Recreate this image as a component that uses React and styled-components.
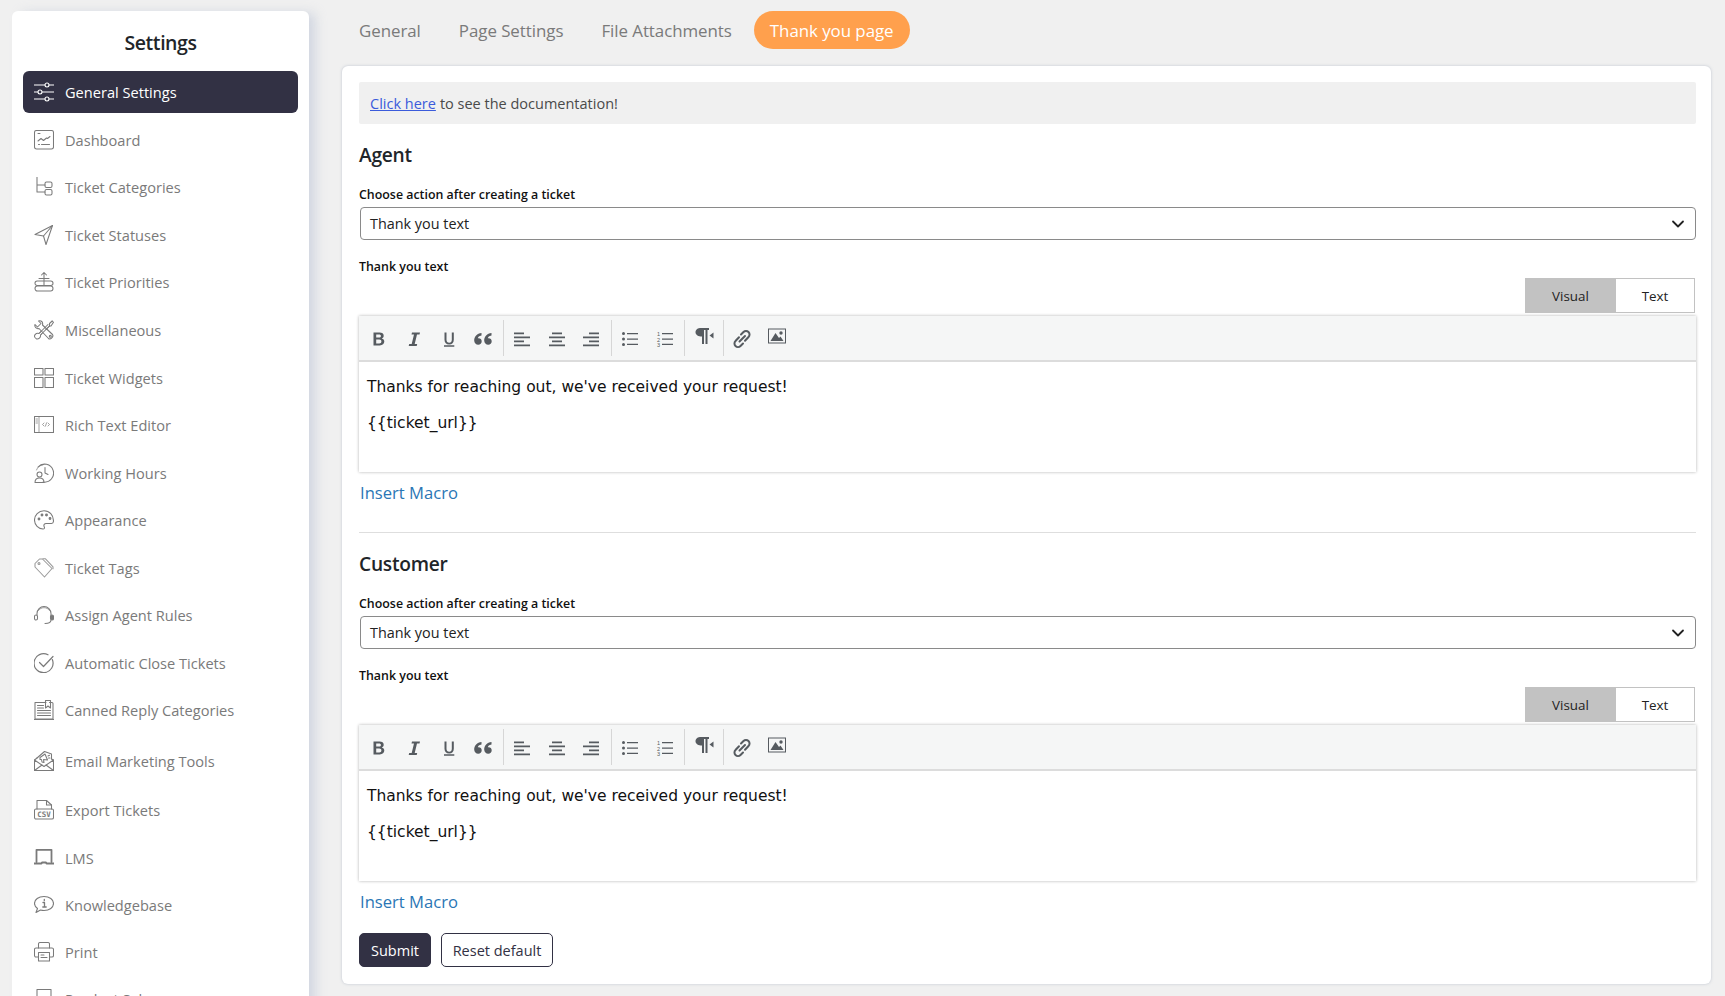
import React from "react";
import styled, { createGlobalStyle } from "styled-components";

const FONT = `"Open Sans", "Noto Sans", "Liberation Sans", sans-serif`;

const Global = createGlobalStyle`
  html, body { margin: 0; padding: 0; height: 996px; overflow: hidden; background: #f0f0f0; }
  * { box-sizing: border-box; }
  body { font-family: ${FONT}; color: #212529; }
`;

const Page = styled.div`
  display: flex;
  align-items: flex-start;
  height: 996px;
  overflow: hidden;
  padding: 11px 14px 0 12px;
  gap: 33px;
`;

const Sidebar = styled.aside`
  flex: 0 0 297px;
  background: #fff;
  border-radius: 6px 6px 0 0;
  box-shadow: 8px 0 12px -2px rgba(170, 182, 206, 0.45);
  padding: 0 11px;
  height: 1040px;
`;

const SideTitle = styled.h2`
  margin: 0;
  height: 60px;
  display: flex;
  align-items: center;
  justify-content: center;
  padding-top: 2px;
  font-size: 19.5px;
  font-weight: 600;
  color: #212529;
  letter-spacing: -0.45px;
`;

const NavList = styled.nav`
  display: flex;
  flex-direction: column;
`;

const NavItem = styled.div`
  display: flex;
  align-items: center;
  gap: 11px;
  flex: none;
  height: ${(p) => p.$h || 47.55}px;
  margin-top: ${(p) => p.$mt || 0}px;
  padding-left: 11px;
  border-radius: 6px;
  font-size: 14.6px;
  color: ${(p) => (p.$active ? "#fff" : "#7a7a7a")};
  background: ${(p) => (p.$active ? "#323144" : "transparent")};
  svg { flex: 0 0 20px; }
`;

const Main = styled.main`
  flex: 1;
  min-width: 0;
  display: flex;
  flex-direction: column;
`;

const TabBar = styled.div`
  display: flex;
  align-items: center;
  gap: 6px;
  height: 38px;
  margin-bottom: 17px;
  padding-left: 1px;
`;

const TopTab = styled.div`
  height: 38px;
  display: flex;
  align-items: center;
  padding: 0 16px;
  border-radius: 19px;
  font-size: 16.9px;
  letter-spacing: -0.05px;
  color: ${(p) => (p.$active ? "#fff" : "#7a7a7a")};
  background: ${(p) => (p.$active ? "#ffa04d" : "transparent")};
`;

const Card = styled.section`
  background: #fff;
  height: 918px;
  border-radius: 6px;
  box-shadow: 0 0 3px rgba(150, 160, 180, 0.55);
  padding: 16px 15px 0 17px;
`;

const Notice = styled.div`
  height: 42px;
  display: flex;
  align-items: center;
  gap: 4px;
  padding-left: 11px;
  background: #f0f0f0;
  border-radius: 2px;
  font-size: 14.5px;
  color: #4a4a4a;
  a { color: #3b5bdb; text-decoration: underline; }
`;

const Block = styled.div`
  display: flex;
  flex-direction: column;
`;

const Heading = styled.h3`
  margin: ${(p) => p.$mt}px 0 0;
  height: 28px;
  line-height: 28px;
  font-size: 19.2px;
  font-weight: 600;
  letter-spacing: -0.25px;
  color: #212529;
`;

const Label = styled.label`
  display: block;
  height: 18px;
  margin-top: ${(p) => p.$mt || 0}px;
  line-height: 18px;
  font-size: 12.4px;
  font-weight: 600;
  color: #111;
`;

const SelectBox = styled.div`
  display: flex;
  align-items: center;
  justify-content: space-between;
  height: 33px;
  margin: 3px 0 18px 1px;
  padding: 0 10px 0 9px;
  border: 1px solid #8a8a8a;
  border-radius: 4px;
  font-size: 14.4px;
  color: #222;
`;

const ModeRow = styled.div`
  display: flex;
  justify-content: flex-end;
  margin-top: 2px;
  height: 35px;
  padding-right: 1px;
`;

const ModeButton = styled.div`
  width: ${(p) => p.$w}px;
  height: 35px;
  display: flex;
  align-items: center;
  justify-content: center;
  font-size: 13.4px;
  color: #222;
  background: ${(p) => (p.$active ? "#c2c2c2" : "#fff")};
  border: 1px solid #c2c2c2;
  border-left-width: ${(p) => (p.$active ? 1 : 0)}px;
`;

const Editor = styled.div`
  margin-top: 3px;
  height: 156px;
  display: flex;
  flex-direction: column;
  box-shadow: 0 0 3px rgba(0, 0, 0, 0.3);
`;

const Toolbar = styled.div`
  height: 46px;
  flex: none;
  display: flex;
  align-items: stretch;
  padding: 4px 0 4px 3px;
  background: #f5f6f6;
  border-bottom: 2px solid #dcdcdc;
`;

const ToolGroup = styled.div`
  display: flex;
  padding-right: 2px;
  margin-right: 1px;
  border-right: ${(p) => (p.$last ? "none" : "1px solid #d6d6d6")};
`;

const ToolButton = styled.div`
  width: 34.7px;
  display: flex;
  align-items: center;
  justify-content: center;
  color: #565b60;
  padding-top: 2px;
  padding-bottom: ${(p) => (p.$raised ? 6 : 0)}px;
`;

const EditorBody = styled.div`
  flex: 1;
  padding: 16px 8px;
  font-family: "DejaVu Sans", Verdana, sans-serif;
  font-size: 15.5px;
  line-height: 19px;
  color: #111;
  p { margin: 0 0 17px; }
`;

const MacroLink = styled.a`
  display: block;
  margin: 9px 0 0 1px;
  height: 24px;
  line-height: 24px;
  font-size: 16.6px;
  color: #2a76b5;
`;

const Divider = styled.hr`
  margin: 27px 0 0;
  border: 0;
  border-top: 1px solid #dedede;
`;

const Actions = styled.div`
  display: flex;
  gap: 10px;
  margin-top: 19px;
`;

const Button = styled.button`
  height: 34px;
  width: ${(p) => p.$w}px;
  padding: 0;
  border-radius: 5px;
  font-family: ${FONT};
  font-size: 14.5px;
  border: 1px solid #323144;
  background: ${(p) => (p.$primary ? "#323144" : "#fff")};
  color: ${(p) => (p.$primary ? "#fff" : "#323144")};
`;

const Ico = ({ children }) => (
  <svg width="20" height="20" viewBox="0 0 20 20" fill="none" stroke="currentColor" strokeWidth="1.05" strokeLinecap="round" strokeLinejoin="round">
    {children}
  </svg>
);

const icons = {
  sliders: (
    <Ico>
      <path d="M0 3h11M15 3h5M0 10h4M8 10h12M0 17h11M15 17h5" />
      <circle cx="13" cy="3" r="2" /><circle cx="6" cy="10" r="2" /><circle cx="13" cy="17" r="2" />
    </Ico>
  ),
  dashboard: (
    <Ico>
      <rect x="0.5" y="0.5" width="19" height="18.5" rx="2" />
      <path d="M4 3.5h2M4 11l3-2.500 2.500 2 3-2.500 1 .5 2.500-2M4.500 14.500h1M7.500 14.500h8" />
    </Ico>
  ),
  categories: (
    <Ico>
      <path d="M3 0v15h8M3 8h8" />
      <rect x="11" y="5" width="7" height="5.500" rx="1.500" />
      <rect x="11" y="12.500" width="7" height="5.500" rx="1.500" />
    </Ico>
  ),
  send: (
    <Ico>
      <path d="M18.500 0.500 1 9.500l8.500 1.500L12 19.500z" /><path d="M18.500 .5 9.500 11" />
    </Ico>
  ),
  priorities: (
    <Ico>
      <path d="M10 .5v17M7.500 3 10 .5 12.500 3M5 6.500h10" />
      <rect x="1" y="9" width="18" height="4.500" rx="2.200" />
      <rect x="1" y="14" width="18" height="5" rx="2.400" fill="#fff" />
    </Ico>
  ),
  tools: (
    <Ico>
      <path d="M1 4.500 3.500 7 7 3.500 4.500 1C7 0 9.300 2 8.500 5l10 9.500c1.500 2-2 5.500-4 4L5 8.500C2.500 9.300.2 7 1 4.500z" />
      <circle cx="16.300" cy="16.300" r="1" />
      <path d="M18.200 1 19.500 2.300 17 6h-1.500L12 9.500M8 13.500l-1.500 1.500c.5 2.500-2 4.500-4 4L1 17.500C-.5 15.500 2 12.500 5 13.500L7 11.500" />
      <path d="M15.500 6V3.500L18.200 1" />
      <path d="M15.500 6 7 14.500M14 4.500 5.500 13" />
    </Ico>
  ),
  widgets: (
    <Ico>
      <rect x=".5" y=".5" width="8.500" height="6.500" /><rect x="11" y=".5" width="8.500" height="6.500" />
      <rect x=".5" y="9.500" width="8.500" height="10" /><rect x="11" y="9.500" width="8.500" height="10" />
    </Ico>
  ),
  code: (
    <Ico>
      <rect x=".5" y="1.500" width="19" height="16" />
      <path d="M5 1.500v16M2 4h1.500M2 6h1.500M2 8h1.500" strokeWidth=".7" />
      <path d="M10 8 8.500 9.500 10 11M14 8l1.500 1.500L14 11M12.600 7.800l-1.200 3.400" strokeWidth=".7" />
    </Ico>
  ),
  clock: (
    <Ico>
      <path d="M4 4a9 9 0 1 1 5 15" />
      <path d="M2.500 7A8 8 0 0 1 9 1.800" strokeWidth=".7" />
      <path d="M11 4.500V10l3 1.500" />
      <circle cx="5.500" cy="11.500" r="2.500" />
      <path d="M1 19.500c0-6 9-6 9 0z" />
    </Ico>
  ),
  palette: (
    <Ico>
      <path d="M10 .8C4.500.8.500 5 .500 10S4.500 19 9 19c1.500 0 1.800-1 1.200-2.200-.8-1.600 0-3.300 2-3.300h5.300c1.200 0 2-1 2-2.500C19.500 5 15.500.8 10 .8z" />
      <circle cx="5" cy="9" r=".9" fill="currentColor" /><circle cx="8" cy="5" r=".9" fill="currentColor" />
      <circle cx="12.500" cy="5" r=".9" fill="currentColor" /><circle cx="16" cy="8.500" r=".9" fill="currentColor" />
    </Ico>
  ),
  tag: (
    <Ico>
      <path d="M1 5.500 5.500 1h3L18 10.500 10.500 19 1 9z" stroke="#999" />
      <path d="M9 .8h2.500l7.500 8v2" stroke="#999" />
      <circle cx="5" cy="5.500" r="1" stroke="#999" />
    </Ico>
  ),
  headset: (
    <Ico>
      <path d="M3 10V8.500a7 7 0 0 1 14 0V10M17 15c0 2.500-2 3.500-6 3.500" />
      <path d="M4.500 5.500a6.500 6.500 0 0 1 11 0" strokeWidth=".7" />
      <rect x=".5" y="10" width="3" height="5" rx="1.500" /><rect x="16.500" y="10" width="3" height="5" rx="1.500" fill="currentColor" />
    </Ico>
  ),
  check: (
    <Ico>
      <path d="M18.300 6.500A9.500 9.500 0 1 1 14 1.800" strokeWidth="1.200" />
      <path d="M5.500 9.500l4 4L19 3.500" strokeWidth="1.200" />
    </Ico>
  ),
  book: (
    <Ico>
      <path d="M1 2.500h11M15.500 2.500H18a1 1 0 0 1 1 1V19H1V2.500M0 19.500h20" />
      <path d="M11.500 .5h5V8L14 6l-2.500 2z" />
      <path d="M3.500 5.500h6M3.500 8h6M3.500 10.500h13M3.500 13h13M3.500 15.500h13" />
    </Ico>
  ),
  mail: (
    <Ico>
      <path d="M3 7 10.500.5 17.500 3v5M.5 9v10.500h19V9L10 15.500z" />
      <path d="M.5 19.500 8 14M19.500 19.500 12 14M.5 9 3 7M19.500 9 17.500 8" />
      <path d="M6 6.500l5-3.500 2.500 6-4-.5 .5 3-2-.5-.5-2.500L6 8.500z" />
      <path d="M14 5l1.500-.8M14.500 7h1.500" />
    </Ico>
  ),
  csv: (
    <Ico>
      <path d="M3 9V.5h9.500L17.500 5v4" />
      <path d="M12.500.5V5h5" />
      <rect x=".5" y="9" width="19" height="10" rx="1.500" />
      <text x="10" y="17" fontFamily="'DejaVu Sans Mono', monospace" fontSize="7.500" fontWeight="700" fill="currentColor" stroke="none" textAnchor="middle">CSV</text>
    </Ico>
  ),
  laptop: (
    <Ico>
      <path d="M2.500 14V1.800h15V14" strokeWidth="1.800" />
      <path d="M0 15.500h7.500l.5-1h4l.5 1H20" strokeWidth="1.800" />
    </Ico>
  ),
  info: (
    <Ico>
      <path d="M10 1.500c5.500 0 9.500 3 9.500 7S15.500 15.500 10 15.500c-1.500 0-2.500-.2-3.500-.5L2 17.500l1.500-4C1.500 12 .5 10.500.5 8.500c0-4 4-7 9.500-7z" strokeWidth="1.100" />
      <path d="M9 7.500h1.500V12M8.800 12h3.400M10.300 4.500v1" strokeWidth="1.300" />
    </Ico>
  ),
  print: (
    <Ico>
      <path d="M4.500 6V2a1.500 1.500 0 0 1 1.500-1.500h8A1.500 1.500 0 0 1 15.500 2v4" />
      <path d="M4 15H2a1.500 1.500 0 0 1-1.500-1.500v-6A1.500 1.500 0 0 1 2 6h16a1.500 1.500 0 0 1 1.500 1.500v6A1.500 1.500 0 0 1 18 15h-2" />
      <path d="M4.500 10.500h11v8.500h-11zM7 13h3M7 15.500h6" />
    </Ico>
  ),
  box: (
    <Ico>
      <rect x="3" y=".5" width="14" height="19" />
    </Ico>
  ),
};

const navItems = [
  { label: "Dashboard", icon: "dashboard", mt: 3 },
  { label: "Ticket Categories", icon: "categories" },
  { label: "Ticket Statuses", icon: "send" },
  { label: "Ticket Priorities", icon: "priorities" },
  { label: "Miscellaneous", icon: "tools" },
  { label: "Ticket Widgets", icon: "widgets" },
  { label: "Rich Text Editor", icon: "code" },
  { label: "Working Hours", icon: "clock" },
  { label: "Appearance", icon: "palette" },
  { label: "Ticket Tags", icon: "tag" },
  { label: "Assign Agent Rules", icon: "headset" },
  { label: "Automatic Close Tickets", icon: "check" },
  { label: "Canned Reply Categories", icon: "book" },
  { label: "Email Marketing Tools", icon: "mail", mt: 3.5 },
  { label: "Export Tickets", icon: "csv", mt: 1.5 },
  { label: "LMS", icon: "laptop", h: 47 },
  { label: "Knowledgebase", icon: "info", h: 47 },
  { label: "Print", icon: "print", h: 47 },
  { label: "Product Sales", icon: "box", h: 47 },
];

const TIcon = ({ children, w = 18, h = 18, vb = "0 0 18 18" }) => (
  <svg width={w} height={h} viewBox={vb} fill="currentColor">{children}</svg>
);

const toolGroups = [
  [
    <TIcon><path fillRule="evenodd" d="M3.500 2.500h6c2.600 0 4.200 1.200 4.200 3.200 0 1.300-.7 2.300-1.900 2.800 1.500.4 2.500 1.500 2.500 3.100 0 2.300-1.800 3.900-4.500 3.900H3.500zm2.700 2.100v3h2.800c1.200 0 1.900-.5 1.900-1.500s-.7-1.500-1.900-1.500zm0 5v3.800h3.100c1.300 0 2.100-.7 2.100-1.900s-.8-1.900-2.100-1.900z" /></TIcon>,
    <TIcon><path d="M7 2.500h8l-.5 2h-2.500l-2.300 9.500h2.500l-.5 2h-8l.5-2h2.500l2.300-9.500H6.500z" /></TIcon>,
    <TIcon><path d="M4.500 2.500h2v7.200c0 2 1 3 2.700 3s2.600-1 2.600-3V2.500h2v7.300c0 3.100-1.800 4.700-4.600 4.700s-4.700-1.600-4.700-4.700zM4 15.300h10.300v1.500H4z" /></TIcon>,
    <TIcon w={20} vb="0 0 20 18"><path d="M8.500 3v2.500C6 6 5 7 4.800 8.300c2.200-.4 3.900.8 3.900 3 0 2-1.500 3.400-3.500 3.400C3 14.700 1.200 13 1.200 10.500 1.200 6.500 4 3.500 8.500 3zM18.500 3v2.500C16 6 15 7 14.800 8.300c2.200-.4 3.900.8 3.900 3 0 2-1.500 3.400-3.500 3.400-2.200 0-4-1.700-4-4.200 0-4 2.800-7 7.300-7.500z" /></TIcon>,
  ],
  [
    <TIcon><path d="M1 2.500h10v1.800H1zM1 6.500h16v1.800H1zM1 10.500h10v1.800H1zM1 14.500h16v1.800H1z" /></TIcon>,
    <TIcon><path d="M4 2.500h10v1.800H4zM1 6.500h16v1.800H1zM4 10.500h10v1.800H4zM1 14.500h16v1.800H1z" /></TIcon>,
    <TIcon><path d="M7 2.500h10v1.800H7zM1 6.500h16v1.800H1zM7 10.500h10v1.800H7zM1 14.500h16v1.800H1z" /></TIcon>,
  ],
  [
    <TIcon>
      <circle cx="2.500" cy="3.500" r="1.500" /><circle cx="2.500" cy="9" r="1.500" /><circle cx="2.500" cy="14.500" r="1.500" />
      <path d="M6 3h11v1.300H6zM6 8.400h11v1.300H6zM6 13.800h11v1.300H6z" />
    </TIcon>,
    <TIcon>
      <path d="M6 3h11v1.300H6zM6 8.400h11v1.300H6zM6 13.800h11v1.300H6z" />
      <text x="2.500" y="6" fontSize="5.500" fontFamily="'Liberation Sans', sans-serif" textAnchor="middle">1</text>
      <text x="2.500" y="11.500" fontSize="5.500" fontFamily="'Liberation Sans', sans-serif" textAnchor="middle">2</text>
      <text x="2.500" y="17" fontSize="5.500" fontFamily="'Liberation Sans', sans-serif" textAnchor="middle">3</text>
    </TIcon>,
  ],
  [
    <TIcon w={20} h={18} vb="0 0 20 18">
      <path d="M7 1h8v2h-1.500v14h-2V3H10v14H8V9.500C4.500 9.500 1.500 8 1.500 5.200 1.500 2.500 4 1 7 1z" /><path d="M19.500 5.500v6L15.500 8.500z" />
    </TIcon>,
  ],
  [
    <TIcon w={20} h={20} vb="0 0 20 20">
      <path fill="none" stroke="currentColor" strokeWidth="2" strokeLinecap="round" d="M7.500 12.500 13 7M9 5.500l2.500-2.500a3.500 3.500 0 0 1 5 5L13 11.800M11 14.500 8.500 17a3.500 3.500 0 0 1-5-5L7 8.200" />
    </TIcon>,
    <TIcon>
      <path fillRule="evenodd" d="M0 1.500h18v15H0zM1 2.500v13h16v-13z" />
      <circle cx="13" cy="6" r="1.700" /><path d="M2.500 14 7.500 6 11 11l1.500-1.500 3 4.500z" />
    </TIcon>,
  ],
];

const Chevron = () => (
  <svg width="14" height="14" viewBox="0 0 14 14" fill="none" stroke="#222" strokeWidth="1.800" strokeLinecap="round" strokeLinejoin="round">
    <path d="M2 4.500l5 5 5-5" />
  </svg>
);

const EditorSection = () => (
  <>
    <Label>Thank you text</Label>
    <ModeRow>
      <ModeButton $active $w={91}>Visual</ModeButton>
      <ModeButton $w={79}>Text</ModeButton>
    </ModeRow>
    <Editor>
      <Toolbar>
        {toolGroups.map((group, i) => (
          <ToolGroup key={i} $last={i === toolGroups.length - 1}>
            {group.map((icon, j) => (
              <ToolButton key={j} $raised={i === 3 || (i === 4 && j === 1)}>{icon}</ToolButton>
            ))}
          </ToolGroup>
        ))}
      </Toolbar>
      <EditorBody>
        <p>Thanks for reaching out, we've received your request!</p>
        <p>{"{{ticket_url}}"}</p>
      </EditorBody>
    </Editor>
    <MacroLink>Insert Macro</MacroLink>
  </>
);

const Section = ({ title, mt }) => (
  <Block>
    <Heading $mt={mt}>{title}</Heading>
    <Label $mt={17}>Choose action after creating a ticket</Label>
    <SelectBox>
      <span>Thank you text</span>
      <Chevron />
    </SelectBox>
    <EditorSection />
  </Block>
);

export default function App() {
  return (
    <>
      <Global />
      <Page>
        <Sidebar>
          <SideTitle>Settings</SideTitle>
          <NavList>
            <NavItem $active $h={42}>{icons.sliders}General Settings</NavItem>
            {navItems.map((n) => (
              <NavItem key={n.label} $h={n.h} $mt={n.mt}>{icons[n.icon]}{n.label}</NavItem>
            ))}
          </NavList>
        </Sidebar>
        <Main>
          <TabBar>
            <TopTab>General</TopTab>
            <TopTab>Page Settings</TopTab>
            <TopTab>File Attachments</TopTab>
            <TopTab $active>Thank you page</TopTab>
          </TabBar>
          <Card>
            <Notice><a>Click here</a> to see the documentation!</Notice>
            <Section title="Agent" mt={17} />
            <Divider />
            <Section title="Customer" mt={17} />
            <Actions>
              <Button $primary $w={72}>Submit</Button>
              <Button $w={112}>Reset default</Button>
            </Actions>
          </Card>
        </Main>
      </Page>
    </>
  );
}
